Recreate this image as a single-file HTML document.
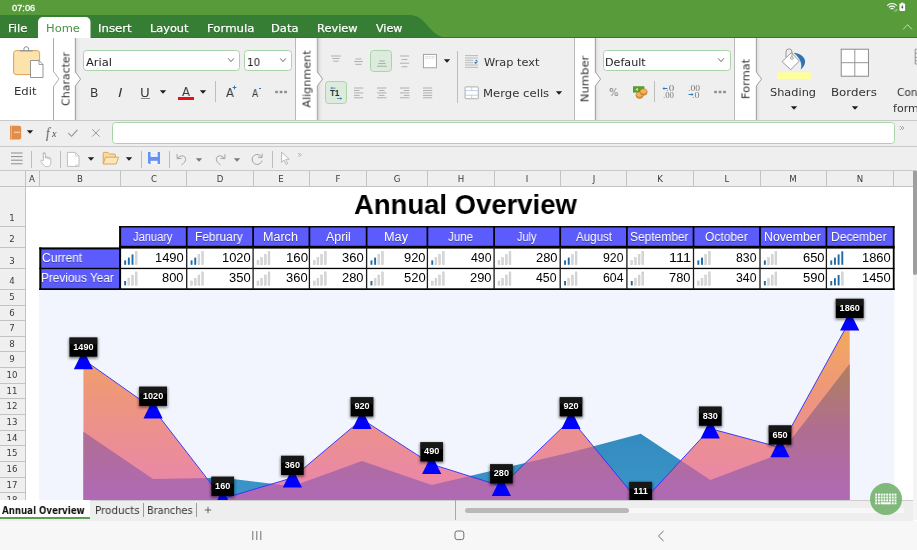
<!DOCTYPE html>
<html lang="en"><head><meta charset="utf-8"><title>Annual Overview - PlanMaker</title>
<style>

html,body{margin:0;padding:0;}
body{width:917px;height:550px;overflow:hidden;background:#fff;}
#app{position:relative;width:917px;height:550px;overflow:hidden;background:#fff;font-family:"DejaVu Sans","Liberation Sans",sans-serif;}
.t{position:absolute;white-space:nowrap;transform-origin:0 50%;display:block;will-change:transform;}
.vt{position:absolute;white-space:nowrap;display:block;will-change:transform;}
.abs{position:absolute;}
svg{position:absolute;overflow:visible;}
.combo{position:absolute;background:#fff;border:1px solid #a9d4a9;border-radius:3.5px;box-sizing:border-box;}
.sel{position:absolute;background:#dcebdc;border:1px solid #a9d4a9;border-radius:3.5px;box-sizing:border-box;}
.vsep{position:absolute;width:1px;background:#bdbdbd;}
.panel{position:absolute;top:38px;height:82px;background:linear-gradient(90deg,#cfcfcf 0,#e6e6e6 2px,#efefef 5px,#efefef 100%);}
.vtab{position:absolute;top:38px;height:82px;background:#fff;box-sizing:border-box;border-left:1px solid #b9b9b9;}
.hs{text-shadow:0 0.5px 0.5px rgba(0,0,40,.35);}
.sh{text-shadow:0 0.5px 0.5px rgba(0,0,0,.35);-webkit-text-stroke:0.25px #fff;}
</style></head>
<body>
<div id="app">
<div id="statusbar" class="abs" style="left:0;top:0;width:917px;height:38px;background:#579b3b;"></div>
<svg width="917" height="39" style="left:0;top:0">
<path d="M0,15 H409 C428,15 428,38 450,38 H0 Z" fill="#357e33"/>
<rect x="0" y="37" width="917" height="1.2" fill="#2c7a28"/>
<path d="M38,38.5 V22 a5,5 0 0 1 5,-5 H85.5 a5,5 0 0 1 5,5 V38.5 Z" fill="#fff"/>
</svg>
<span id="t1" class="t " style="left:12.00px;top:4.00px;font:normal 400 9.3px/9.3px 'Liberation Sans','DejaVu Sans',sans-serif;color:#fff;transform:scaleX(0.9959);-webkit-text-stroke:0.3px #fff;">07:06</span>
<span id="t2" class="t sh" style="left:8.17px;top:23.00px;font:normal 400 11px/11px 'DejaVu Sans','Liberation Sans',sans-serif;color:#fff;transform:scaleX(1.0545);">File</span>
<span id="t3" class="t " style="left:45.66px;top:23.00px;font:normal 400 11px/11px 'DejaVu Sans','Liberation Sans',sans-serif;color:#4b8f45;transform:scaleX(1.0436);">Home</span>
<span id="t4" class="t sh" style="left:98.03px;top:23.00px;font:normal 400 11px/11px 'DejaVu Sans','Liberation Sans',sans-serif;color:#fff;transform:scaleX(1.0660);">Insert</span>
<span id="t5" class="t sh" style="left:150.15px;top:23.00px;font:normal 400 11px/11px 'DejaVu Sans','Liberation Sans',sans-serif;color:#fff;transform:scaleX(1.0275);">Layout</span>
<span id="t6" class="t sh" style="left:206.63px;top:23.00px;font:normal 400 11px/11px 'DejaVu Sans','Liberation Sans',sans-serif;color:#fff;transform:scaleX(1.0670);">Formula</span>
<span id="t7" class="t sh" style="left:271.07px;top:23.00px;font:normal 400 11px/11px 'DejaVu Sans','Liberation Sans',sans-serif;color:#fff;transform:scaleX(1.0439);">Data</span>
<span id="t8" class="t sh" style="left:316.62px;top:23.00px;font:normal 400 11px/11px 'DejaVu Sans','Liberation Sans',sans-serif;color:#fff;transform:scaleX(1.0353);">Review</span>
<span id="t9" class="t sh" style="left:376.20px;top:23.00px;font:normal 400 11px/11px 'DejaVu Sans','Liberation Sans',sans-serif;color:#fff;transform:scaleX(1.0112);">View</span>
<svg width="24" height="12" style="left:885px;top:1px" viewBox="0 0 24 12">
<path d="M2.2,4.6 A6.6,6.6 0 0 1 11.8,4.6" fill="none" stroke="#fff" stroke-width="1.1"/>
<path d="M3.9,6.4 A4.3,4.3 0 0 1 10.1,6.4" fill="none" stroke="#fff" stroke-width="1.1"/>
<path d="M5.5,8.1 A2.2,2.2 0 0 1 8.5,8.1" fill="none" stroke="#fff" stroke-width="1.1"/>
<rect x="14.4" y="2.5" width="5.7" height="7.4" rx="0.9" fill="#fff"/><rect x="16" y="1.7" width="2.5" height="1.2" fill="#fff"/>
<path d="M17.8,3.6 L16.1,6.4 H17.3 L16.8,8.6 L18.5,5.7 H17.3 Z" fill="#1c1c1c"/>
<path d="M10,8.2 v2.4 M9.3,9.9 l0.7,0.8 l0.7,-0.8 M11.8,10.6 v-2.4 M11.1,8.9 l0.7,-0.8 l0.7,0.8" fill="none" stroke="#cfe3c6" stroke-width="0.5"/>
</svg>
<svg width="12" height="8" style="left:902px;top:22.5px" viewBox="0 0 12 8"><path d="M1.2,6.4 L5.6,1.7 L10,6.4" fill="none" stroke="#d6e8ce" stroke-width="0.9"/></svg>
<div id="ribbon" class="abs" style="left:0;top:38px;width:917px;height:82px;background:#efefef;"></div>
<div class="abs" style="left:0;top:38px;width:54px;height:82px;background:#fff;"></div>
<div class="panel" style="left:75px;width:220.5px;"></div>
<div class="panel" style="left:317.5px;width:256.29999999999995px;"></div>
<div class="panel" style="left:595.2px;width:139.19999999999993px;"></div>
<div class="panel" style="left:756.3px;width:160.70000000000005px;"></div>
<div class="vtab" style="left:53.5px;width:21.5px;"></div>
<svg width="8" height="16" style="left:74.5px;top:71px" viewBox="0 0 8 16"><path d="M0,0.5 L0,1 L5.4,8 L0,15 L0,15.5 Z" fill="#fff"/><path d="M0.3,-33 V1 L5.6,8 L0.3,15 V49" fill="none" stroke="#9a9a9a" stroke-width="0.9"/></svg>
<span id="t10" class="vt" style="left:65.6px;top:79px;font:400 11px/11px 'DejaVu Sans','Liberation Sans',sans-serif;color:#333;transform:translate(-50%,-50%) rotate(-90deg) scaleX(0.9912);">Character</span>
<div class="vtab" style="left:295.2px;width:22.30000000000001px;"></div>
<svg width="8" height="16" style="left:317.0px;top:71px" viewBox="0 0 8 16"><path d="M0,0.5 L0,1 L5.4,8 L0,15 L0,15.5 Z" fill="#fff"/><path d="M0.3,-33 V1 L5.6,8 L0.3,15 V49" fill="none" stroke="#9a9a9a" stroke-width="0.9"/></svg>
<span id="t11" class="vt" style="left:307.4px;top:78.8px;font:400 11px/11px 'DejaVu Sans','Liberation Sans',sans-serif;color:#333;transform:translate(-50%,-50%) rotate(-90deg) scaleX(1.0167);">Alignment</span>
<div class="vtab" style="left:573.8px;width:21.40000000000009px;"></div>
<svg width="8" height="16" style="left:594.7px;top:71px" viewBox="0 0 8 16"><path d="M0,0.5 L0,1 L5.4,8 L0,15 L0,15.5 Z" fill="#fff"/><path d="M0.3,-33 V1 L5.6,8 L0.3,15 V49" fill="none" stroke="#9a9a9a" stroke-width="0.9"/></svg>
<span id="t12" class="vt" style="left:585.2px;top:79px;font:400 11px/11px 'DejaVu Sans','Liberation Sans',sans-serif;color:#333;transform:translate(-50%,-50%) rotate(-90deg) scaleX(1.0535);">Number</span>
<div class="vtab" style="left:734.4px;width:21.899999999999977px;"></div>
<svg width="8" height="16" style="left:755.8px;top:71px" viewBox="0 0 8 16"><path d="M0,0.5 L0,1 L5.4,8 L0,15 L0,15.5 Z" fill="#fff"/><path d="M0.3,-33 V1 L5.6,8 L0.3,15 V49" fill="none" stroke="#9a9a9a" stroke-width="0.9"/></svg>
<span id="t13" class="vt" style="left:746.2px;top:78.8px;font:400 11px/11px 'DejaVu Sans','Liberation Sans',sans-serif;color:#333;transform:translate(-50%,-50%) rotate(-90deg) scaleX(1.0403);">Format</span>
<div class="abs" style="left:52.5px;top:38px;width:3px;height:82px;background:#fff;"></div>
<svg width="8" height="82" style="left:53px;top:38px" viewBox="0 0 8 82"><path d="M0.5,0 V33.4 L6,41 L0.5,48.6 V82" fill="none" stroke="#a2a2a2" stroke-width="0.9"/></svg>
<div class="abs" style="left:0;top:120px;width:917px;height:1px;background:#c9c9c9;"></div>
<svg width="34" height="34" style="left:11px;top:45px" viewBox="0 0 34 34">
<rect x="2.6" y="5.6" width="26" height="24" rx="2.6" fill="#fce2ab" stroke="#dfa255" stroke-width="1"/>
<path d="M12.9,5.4 V4 a2.3,2.3 0 0 1 4.6,0 V5.4" fill="#fff" stroke="#8d8d8d" stroke-width="1"/><rect x="8.7" y="4.9" width="13.1" height="1.6" rx="0.8" fill="#9a9a9a"/>
<path d="M19.5,15.5 H28 L32,19.5 V32.5 H19.5 Z" fill="#fff" stroke="#8a8a8a" stroke-width="0.9"/><path d="M28,15.5 V19.5 H32" fill="none" stroke="#8a8a8a" stroke-width="0.8"/>
</svg>
<span id="t14" class="t " style="left:14.34px;top:86.00px;font:normal 400 11px/11px 'DejaVu Sans','Liberation Sans',sans-serif;color:#333;transform:scaleX(1.0606);">Edit</span>
<div class="combo" style="left:83.4px;top:50px;width:157.1px;height:21px;"></div>
<span id="t15" class="t " style="left:85.50px;top:57.00px;font:normal 400 11px/11px 'DejaVu Sans','Liberation Sans',sans-serif;color:#222;transform:scaleX(1.0425);">Arial</span>
<svg width="10" height="8" style="left:226.2px;top:56.3px" viewBox="0 0 10 8"><path d="M2.2,2.4 L5,5.6 L7.8,2.4" fill="none" stroke="#555" stroke-width="0.9"/></svg>
<div class="combo" style="left:244.3px;top:50px;width:47.5px;height:21px;"></div>
<span id="t16" class="t " style="left:246.95px;top:57.00px;font:normal 400 11px/11px 'DejaVu Sans','Liberation Sans',sans-serif;color:#222;transform:scaleX(0.9463);">10</span>
<svg width="10" height="8" style="left:277.8px;top:56.3px" viewBox="0 0 10 8"><path d="M2.2,2.4 L5,5.6 L7.8,2.4" fill="none" stroke="#555" stroke-width="0.9"/></svg>
<span id="t17" class="t " style="left:90.17px;top:87.00px;font:normal 400 12px/12px 'DejaVu Sans','Liberation Sans',sans-serif;color:#3a3a3a;transform:scaleX(1.0143);">B</span>
<span id="t18" class="t " style="left:118.41px;top:87.00px;font:italic 400 12.4px/12.4px 'Liberation Sans','DejaVu Sans',sans-serif;color:#3a3a3a;transform:scaleX(1.2406);">I</span>
<span id="t19" class="t " style="left:140.49px;top:87.00px;font:normal 400 12px/12px 'DejaVu Sans','Liberation Sans',sans-serif;color:#3a3a3a;transform:scaleX(1.1143);">U</span>
<div class="abs" style="left:141.2px;top:98px;width:8.6px;height:1px;background:#858585;"></div>
<svg width="10" height="8" style="left:158.2px;top:88px" viewBox="0 0 10 8"><path d="M1.7999999999999998,2.3 H8.2 L5,5.7 Z" fill="#1e1e1e"/></svg>
<span id="t20" class="t " style="left:182.34px;top:86.00px;font:normal 400 12px/12px 'DejaVu Sans','Liberation Sans',sans-serif;color:#3a3a3a;transform:scaleX(0.9726);">A</span>
<div class="abs" style="left:177.7px;top:97.1px;width:16.2px;height:2.5px;background:#ee0c18;"></div>
<svg width="10" height="8" style="left:198.4px;top:88px" viewBox="0 0 10 8"><path d="M1.7999999999999998,2.3 H8.2 L5,5.7 Z" fill="#1e1e1e"/></svg>
<div class="vsep" style="left:215px;top:81px;height:21px;"></div>
<span id="t21" class="t " style="left:225.60px;top:87.00px;font:normal 400 12px/12px 'DejaVu Sans','Liberation Sans',sans-serif;color:#3a3a3a;transform:scaleX(0.9556);">A</span>
<svg width="5" height="5" style="left:232.2px;top:85.2px" viewBox="0 0 5 5"><path d="M2.5,0.6 V4.4 M0.6,2.5 H4.4" stroke="#2f79b9" stroke-width="1"/></svg>
<span id="t22" class="t " style="left:252.00px;top:88.00px;font:normal 400 10.5px/10.5px 'DejaVu Sans','Liberation Sans',sans-serif;color:#3a3a3a;transform:scaleX(0.8750);">A</span>
<div class="abs" style="left:258.6px;top:87.6px;width:2.8px;height:1px;background:#2f79b9;"></div>
<svg width="14" height="4" style="left:274.2px;top:90px" viewBox="0 0 14 4"><rect x="1.2" y="0.8" width="2.7" height="2.4" fill="#8c8c8c"/><rect x="5.7" y="0.8" width="2.7" height="2.4" fill="#8c8c8c"/><rect x="10.2" y="0.8" width="2.7" height="2.4" fill="#8c8c8c"/></svg>
<svg width="11.8" height="20" style="left:329.6px;top:53.0px" viewBox="0 0 11.8 20"><rect x="1.00" y="2.55" width="9.80" height="0.9" fill="#a9a9a9"/><rect x="2.22" y="5.15" width="7.35" height="0.9" fill="#a9a9a9"/><rect x="3.20" y="7.75" width="5.39" height="0.9" fill="#a9a9a9"/></svg>
<svg width="11.0" height="20" style="left:352.8px;top:55.7px" viewBox="0 0 11.0 20"><rect x="2.35" y="2.55" width="6.30" height="0.9" fill="#a9a9a9"/><rect x="1.00" y="5.15" width="9.00" height="0.9" fill="#a9a9a9"/><rect x="2.35" y="7.85" width="6.30" height="0.9" fill="#a9a9a9"/></svg>
<div class="sel" style="left:370.4px;top:50.2px;width:22px;height:22.2px;"></div>
<svg width="11.9" height="20" style="left:375.7px;top:58.2px" viewBox="0 0 11.9 20"><rect x="3.23" y="2.55" width="5.45" height="0.9" fill="#9fa89f"/><rect x="2.24" y="5.15" width="7.43" height="0.9" fill="#9fa89f"/><rect x="1.00" y="7.75" width="9.90" height="0.9" fill="#9fa89f"/></svg>
<svg width="11.1" height="20" style="left:398.6px;top:53.0px" viewBox="0 0 11.1 20"><rect x="1.00" y="2.55" width="9.10" height="0.9" fill="#a9a9a9"/><rect x="2.59" y="6.15" width="5.91" height="0.9" fill="#a9a9a9"/><rect x="1.00" y="9.75" width="9.10" height="0.9" fill="#a9a9a9"/><rect x="2.59" y="13.35" width="5.91" height="0.9" fill="#a9a9a9"/></svg>
<svg width="16" height="16" style="left:422.2px;top:53.3px" viewBox="0 0 16 16"><rect x="1.4" y="1.4" width="13" height="13.4" fill="#fff" stroke="#9a9a9a" stroke-width="0.9"/>
<path d="M3.2,3.6 H12.6 M3.2,5.2 H12.6" stroke="#c4c4c4" stroke-width="0.7" stroke-dasharray="1.2 0.5"/></svg>
<svg width="10" height="8" style="left:442.2px;top:56.6px" viewBox="0 0 10 8"><path d="M1.7999999999999998,2.3 H8.2 L5,5.7 Z" fill="#1e1e1e"/></svg>
<div class="sel" style="left:324.5px;top:81.4px;width:22.3px;height:22.3px;"></div>
<span id="t23" class="t " style="left:330.40px;top:89.00px;font:normal 700 9px/9px 'Liberation Sans','DejaVu Sans',sans-serif;color:#2a2a2a;transform:scaleX(0.8954);">T1</span>
<svg width="16" height="16" style="left:327.5px;top:84.5px" viewBox="0 0 16 16"><path d="M3.4,3.1 H7.4" stroke="#2f79b9" stroke-width="0.8" fill="none"/><path d="M2.4,3.1 L4.2,1.9 V4.3 Z" fill="#2f79b9"/>
<path d="M9,13.5 H13" stroke="#2f79b9" stroke-width="0.8" fill="none"/><path d="M14.2,13.5 L12.4,12.3 V14.7 Z" fill="#2f79b9"/></svg>
<svg width="11.2" height="20" style="left:352.8px;top:84.7px" viewBox="0 0 11.2 20"><rect x="1.00" y="2.55" width="9.20" height="0.9" fill="#a9a9a9"/><rect x="1.00" y="5.00" width="5.52" height="0.9" fill="#a9a9a9"/><rect x="1.00" y="7.45" width="9.20" height="0.9" fill="#a9a9a9"/><rect x="1.00" y="9.90" width="5.52" height="0.9" fill="#a9a9a9"/><rect x="1.00" y="12.35" width="9.20" height="0.9" fill="#a9a9a9"/></svg>
<svg width="11.4" height="20" style="left:375.6px;top:84.7px" viewBox="0 0 11.4 20"><rect x="1.00" y="2.55" width="9.40" height="0.9" fill="#a9a9a9"/><rect x="2.88" y="5.00" width="5.64" height="0.9" fill="#a9a9a9"/><rect x="1.00" y="7.45" width="9.40" height="0.9" fill="#a9a9a9"/><rect x="2.88" y="9.90" width="5.64" height="0.9" fill="#a9a9a9"/><rect x="1.00" y="12.35" width="9.40" height="0.9" fill="#a9a9a9"/></svg>
<svg width="11.4" height="20" style="left:398.6px;top:84.7px" viewBox="0 0 11.4 20"><rect x="1.00" y="2.55" width="9.40" height="0.9" fill="#a9a9a9"/><rect x="4.76" y="5.00" width="5.64" height="0.9" fill="#a9a9a9"/><rect x="1.00" y="7.45" width="9.40" height="0.9" fill="#a9a9a9"/><rect x="4.76" y="9.90" width="5.64" height="0.9" fill="#a9a9a9"/><rect x="1.00" y="12.35" width="9.40" height="0.9" fill="#a9a9a9"/></svg>
<svg width="11.2" height="20" style="left:421.8px;top:84.7px" viewBox="0 0 11.2 20"><rect x="1.00" y="2.55" width="9.20" height="0.9" fill="#a9a9a9"/><rect x="1.00" y="5.00" width="9.20" height="0.9" fill="#a9a9a9"/><rect x="1.00" y="7.45" width="9.20" height="0.9" fill="#a9a9a9"/><rect x="1.00" y="9.90" width="9.20" height="0.9" fill="#a9a9a9"/><rect x="1.00" y="12.35" width="9.20" height="0.9" fill="#a9a9a9"/></svg>
<div class="vsep" style="left:456.8px;top:50.5px;height:52px;"></div>
<svg width="16" height="15" style="left:464px;top:53.6px" viewBox="0 0 16 15"><path d="M1,1.6 H14 M1,4 H14 M1,6.3 H9.4 M1,8.7 H9.4 M1,11 H14 M1,13.4 H14" stroke="#b4b4b4" stroke-width="0.9"/>
<path d="M10.6,8.8 H13 V6.4 H11.4" fill="none" stroke="#2f79b9" stroke-width="0.9"/><path d="M12,7.6 L10.4,8.8 L12,10 Z" fill="#2f79b9"/></svg>
<span id="t24" class="t " style="left:484.01px;top:57.00px;font:normal 400 11px/11px 'DejaVu Sans','Liberation Sans',sans-serif;color:#333;transform:scaleX(1.0292);">Wrap text</span>
<svg width="16" height="14" style="left:463.6px;top:85.8px" viewBox="0 0 16 14"><rect x="1.1" y="0.9" width="13.2" height="11.8" rx="0.5" fill="#fff" stroke="#a6a6a6" stroke-width="0.9"/>
<path d="M1,4.6 H14.4 M1,9.2 H14.4" stroke="#a9c4e4" stroke-width="0.8"/><path d="M7.7,1 V4.4 M7.7,9.3 V12.6" stroke="#c2c2c2" stroke-width="0.8"/></svg>
<span id="t25" class="t " style="left:483.26px;top:88.00px;font:normal 400 11px/11px 'DejaVu Sans','Liberation Sans',sans-serif;color:#333;transform:scaleX(1.0591);">Merge cells</span>
<svg width="10" height="8" style="left:554.2px;top:88.6px" viewBox="0 0 10 8"><path d="M1.7999999999999998,2.3 H8.2 L5,5.7 Z" fill="#1e1e1e"/></svg>
<div class="combo" style="left:602.5px;top:50px;width:128px;height:21px;"></div>
<span id="t26" class="t " style="left:604.99px;top:57.00px;font:normal 400 11px/11px 'DejaVu Sans','Liberation Sans',sans-serif;color:#222;transform:scaleX(1.0131);">Default</span>
<svg width="10" height="8" style="left:716.2px;top:56.3px" viewBox="0 0 10 8"><path d="M2.2,2.4 L5,5.6 L7.8,2.4" fill="none" stroke="#555" stroke-width="0.9"/></svg>
<span id="t27" class="t " style="left:609.00px;top:87.00px;font:normal 400 11px/11px 'DejaVu Sans','Liberation Sans',sans-serif;color:#7a7a7a;transform:scaleX(0.9200);">%</span>
<svg width="17" height="15" style="left:631.6px;top:85px" viewBox="0 0 17 15"><rect x="1" y="1.2" width="11.4" height="6.4" fill="#5d9b34"/><path d="M3.4,4.4 l2.4,-1.6 v3.2 Z" fill="#d9ecc9"/>
<ellipse cx="7.6" cy="10.6" rx="3.6" ry="2.8" fill="#e0953a" stroke="#c27820" stroke-width="0.6"/><ellipse cx="7.6" cy="9.6" rx="3.6" ry="2.6" fill="#f0b463" stroke="#c27820" stroke-width="0.6"/>
<ellipse cx="11.6" cy="7.4" rx="3.5" ry="2.8" fill="#e0953a" stroke="#c27820" stroke-width="0.6"/><ellipse cx="11.6" cy="6.4" rx="3.5" ry="2.6" fill="#f0b463" stroke="#c27820" stroke-width="0.6"/></svg>
<div class="vsep" style="left:653.8px;top:81px;height:21px;"></div>
<span id="t28" class="t " style="left:665.60px;top:85.00px;font:normal 400 7.6px/7.6px 'Liberation Sans','DejaVu Sans',sans-serif;font-family:'Liberation Serif','DejaVu Serif',serif;color:#7a7a7a;transform:scaleX(1.4580);font-family:'Liberation Serif','DejaVu Serif',serif;">.0</span>
<span id="t29" class="t " style="left:663.00px;top:92.00px;font:normal 400 7.6px/7.6px 'Liberation Sans','DejaVu Sans',sans-serif;font-family:'Liberation Serif','DejaVu Serif',serif;color:#7a7a7a;transform:scaleX(1.1552);font-family:'Liberation Serif','DejaVu Serif',serif;">.00</span>
<svg width="6" height="5" style="left:661.6px;top:85.6px" viewBox="0 0 6 5"><path d="M5.4,2.5 H1.6" stroke="#2f79b9" stroke-width="1"/><path d="M0.4,2.5 L2.4,0.9 V4.1 Z" fill="#2f79b9"/></svg>
<span id="t30" class="t " style="left:688.38px;top:85.00px;font:normal 400 7.6px/7.6px 'Liberation Sans','DejaVu Sans',sans-serif;font-family:'Liberation Serif','DejaVu Serif',serif;color:#7a7a7a;transform:scaleX(1.2691);font-family:'Liberation Serif','DejaVu Serif',serif;">.00</span>
<span id="t31" class="t " style="left:692.40px;top:92.00px;font:normal 400 7.6px/7.6px 'Liberation Sans','DejaVu Sans',sans-serif;font-family:'Liberation Serif','DejaVu Serif',serif;color:#7a7a7a;transform:scaleX(1.3224);font-family:'Liberation Serif','DejaVu Serif',serif;">.0</span>
<svg width="6" height="5" style="left:687.6px;top:92.2px" viewBox="0 0 6 5"><path d="M0.6,2.5 H4.4" stroke="#2f79b9" stroke-width="1"/><path d="M5.6,2.5 L3.6,0.9 V4.1 Z" fill="#2f79b9"/></svg>
<svg width="14" height="4" style="left:713px;top:90px" viewBox="0 0 14 4"><rect x="1.2" y="0.8" width="2.7" height="2.4" fill="#8c8c8c"/><rect x="5.7" y="0.8" width="2.7" height="2.4" fill="#8c8c8c"/><rect x="10.2" y="0.8" width="2.7" height="2.4" fill="#8c8c8c"/></svg>
<svg width="36" height="34" style="left:775.5px;top:46px" viewBox="0 0 36 34">
<path d="M17.5,6.8 C23,7 29,10.8 29.1,15.1 C29.2,19 27,22 24.7,23.4 C26.6,18.6 24.4,12.2 17.5,6.8 Z" fill="#2f74ae"/>
<path d="M15.4,6.6 L23.3,15.1 L14.7,23.7 L6.1,15.6 Z" fill="#fff" stroke="#8e8e8e" stroke-width="0.9" stroke-linejoin="round"/>
<path d="M10,11.4 V6 a3,3.1 0 0 1 6,0 V10.6" fill="none" stroke="#8e8e8e" stroke-width="0.9"/><circle cx="15.9" cy="12" r="1.4" fill="#fff" stroke="#8e8e8e" stroke-width="0.8"/>
<rect x="1.5" y="26.3" width="33.3" height="6.6" fill="#ffff99"/></svg>
<span id="t32" class="t " style="left:769.72px;top:87.00px;font:normal 400 11px/11px 'DejaVu Sans','Liberation Sans',sans-serif;color:#333;transform:scaleX(1.0296);">Shading</span>
<svg width="10" height="8" style="left:788.5px;top:103.7px" viewBox="0 0 10 8"><path d="M1.7999999999999998,2.3 H8.2 L5,5.7 Z" fill="#1e1e1e"/></svg>
<svg width="30" height="30" style="left:840px;top:47.5px" viewBox="0 0 30 30"><rect x="1.2" y="1.2" width="27.2" height="27" fill="#fff" stroke="#7f7f7f" stroke-width="0.9"/><path d="M14.8,1.2 V28.2 M1.2,14.7 H28.4" stroke="#8b8b8b" stroke-width="0.9"/></svg>
<span id="t33" class="t " style="left:831.18px;top:87.00px;font:normal 400 11px/11px 'DejaVu Sans','Liberation Sans',sans-serif;color:#333;transform:scaleX(1.0746);">Borders</span>
<svg width="10" height="8" style="left:849.5px;top:103.7px" viewBox="0 0 10 8"><path d="M1.7999999999999998,2.3 H8.2 L5,5.7 Z" fill="#1e1e1e"/></svg>
<span id="t34" class="t " style="left:897.00px;top:87.00px;font:normal 400 11px/11px 'DejaVu Sans','Liberation Sans',sans-serif;color:#333;transform:scaleX(0.9575);">Con</span>
<span id="t35" class="t " style="left:893.00px;top:103.00px;font:normal 400 11px/11px 'DejaVu Sans','Liberation Sans',sans-serif;color:#333;transform:scaleX(1.0027);">form</span>
<svg width="6" height="30" style="left:913.6px;top:47.5px" viewBox="0 0 6 30"><path d="M1.2,1.2 H6 M1.2,1.2 V16 H6 M1.2,5.2 H6 M1.2,9.4 H6 M1.2,12.8 H6" stroke="#8b8b8b" stroke-width="0.9" fill="none"/></svg>
<div id="formulabar" class="abs" style="left:0;top:121px;width:917px;height:25px;background:#efefef;"></div>
<div class="abs" style="left:0;top:146px;width:917px;height:1px;background:#c9c9c9;"></div>
<svg width="14" height="17" style="left:8.8px;top:124.4px" viewBox="0 0 14 17"><path d="M1,1.7 H10.2 a2,2 0 0 1 2,2 V13.4 a2,2 0 0 1 -2,2 H1 Z" fill="#e38c47"/><rect x="1.9" y="1.7" width="0.8" height="13.7" fill="#f3bd92"/>
<rect x="5.3" y="7.6" width="1.3" height="1.5" fill="#fdeee2"/><rect x="7.4" y="7.6" width="1.3" height="1.5" fill="#fdeee2"/><rect x="9.5" y="7.6" width="1.3" height="1.5" fill="#fdeee2"/></svg>
<svg width="10" height="8" style="left:25px;top:128.4px" viewBox="0 0 10 8"><path d="M1.7999999999999998,2.3 H8.2 L5,5.7 Z" fill="#1e1e1e"/></svg>
<span id="t36" class="t " style="left:46.40px;top:125.00px;font:italic 400 15.5px/15.5px 'Liberation Sans','DejaVu Sans',sans-serif;font-family:'Liberation Serif','DejaVu Serif',serif;color:#4a4a4a;transform:scaleX(0.8000);font-family:'Liberation Serif','DejaVu Serif',serif;">f</span>
<span id="t37" class="t " style="left:51.53px;top:129.00px;font:italic 400 10.5px/10.5px 'Liberation Sans','DejaVu Sans',sans-serif;font-family:'Liberation Serif','DejaVu Serif',serif;color:#4a4a4a;transform:scaleX(0.9333);font-family:'Liberation Serif','DejaVu Serif',serif;">x</span>
<svg width="12" height="11" style="left:67.4px;top:127.4px" viewBox="0 0 12 11"><path d="M1.3,6.2 L4.6,9.3 L10.4,2.8" fill="none" stroke="#8f8f8f" stroke-width="1.1"/></svg>
<svg width="10" height="10" style="left:91.4px;top:128.2px" viewBox="0 0 10 10"><path d="M1.2,1.2 L8.6,8.6 M8.6,1.2 L1.2,8.6" fill="none" stroke="#8f8f8f" stroke-width="0.9"/></svg>
<div class="combo" style="left:112px;top:122.3px;width:783.3px;height:21.4px;"></div>
<svg width="6" height="6" style="left:899.4px;top:125.4px" viewBox="0 0 6 6"><path d="M0.8,1 L2.8,3 L0.8,5 M3,1 L5,3 L3,5" fill="none" stroke="#8a8a8a" stroke-width="0.7"/></svg>
<div id="toolbar" class="abs" style="left:0;top:147px;width:917px;height:23px;background:#efefef;"></div>
<div class="abs" style="left:0;top:170px;width:917px;height:1px;background:#c9c9c9;"></div>
<svg width="14" height="15" style="left:10px;top:151px" viewBox="0 0 14 15"><path d="M1,2 H12.6 M1,5.6 H12.6 M1,9.2 H12.6 M1,12.8 H12.6" stroke="#8c8c8c" stroke-width="1"/></svg>
<div class="vsep" style="left:31.2px;top:150.5px;height:17px;"></div>
<svg width="14" height="17" style="left:38.6px;top:150.6px" viewBox="0 0 14 17"><circle cx="5.2" cy="2.6" r="1.6" fill="#b7c7ea"/>
<path d="M4.4,9.6 V3.4 a1,1 0 0 1 2,0 V7.2 V6.4 a0.9,0.9 0 0 1 1.8,0 V7.6 V7 a0.9,0.9 0 0 1 1.8,0 V8.2 V7.8 a0.9,0.9 0 0 1 1.8,0 V11.6 C11.8,14.6 10.4,15.6 8.2,15.6 C5.6,15.6 4.6,14.4 2,10.6 C1.4,9.6 2.6,8.8 3.4,9.6 Z" fill="#fff" stroke="#ababab" stroke-width="0.8"/></svg>
<div class="vsep" style="left:60px;top:150.5px;height:17px;"></div>
<svg width="15" height="17" style="left:66px;top:150.8px" viewBox="0 0 15 17"><path d="M1.4,1.4 H9.4 L13,5 V15.4 H1.4 Z" fill="#fff" stroke="#b8b8b8" stroke-width="0.9"/><path d="M9.4,1.4 V5 H13" fill="none" stroke="#c4c4c4" stroke-width="0.8"/><rect x="9" y="13.6" width="3" height="1" fill="#d0d0d0"/></svg>
<svg width="10" height="8" style="left:86.4px;top:155px" viewBox="0 0 10 8"><path d="M1.7999999999999998,2.3 H8.2 L5,5.7 Z" fill="#1e1e1e"/></svg>
<svg width="18" height="15" style="left:102px;top:151.2px" viewBox="0 0 18 15"><path d="M1.2,12.8 V2.2 a0.8,0.8 0 0 1 0.8,-0.8 H6 L7.6,3 H12.6 a0.8,0.8 0 0 1 0.8,0.8 V6" fill="#fbd99b" stroke="#d9a24f" stroke-width="0.9"/>
<path d="M1.2,13 L3.6,6.2 H16.6 L14.2,13 Z" fill="#fde6b8" stroke="#d9a24f" stroke-width="0.9" stroke-linejoin="round"/></svg>
<svg width="10" height="8" style="left:124px;top:155px" viewBox="0 0 10 8"><path d="M1.7999999999999998,2.3 H8.2 L5,5.7 Z" fill="#1e1e1e"/></svg>
<div class="vsep" style="left:141.4px;top:150.5px;height:17px;"></div>
<svg width="14" height="14" style="left:147.2px;top:151.2px" viewBox="0 0 14 14"><path d="M1,1 H13 V13.1 H2.2 L1,11.9 Z" fill="#6492f3"/><rect x="3.6" y="1" width="7" height="4.9" fill="#f4f7fe"/><rect x="4.6" y="2" width="5" height="2.4" fill="#e4ebfc"/><rect x="3.6" y="9.8" width="7" height="3.3" fill="#f7f5ee"/></svg>
<div class="vsep" style="left:168.8px;top:150.5px;height:17px;"></div>
<svg width="14" height="14" style="left:175px;top:152px" viewBox="0 0 14 14"><path d="M2.6,6.4 C5.4,2.2 11,3.4 10.6,7.6 C10.4,9.6 8.8,11.4 6.6,12.8" fill="none" stroke="#a3a3a3" stroke-width="1"/><path d="M2,2.2 L2.2,6.8 L6.6,6.2" fill="none" stroke="#a3a3a3" stroke-width="1"/></svg>
<svg width="10" height="8" style="left:194.4px;top:155.6px" viewBox="0 0 10 8"><path d="M1.7999999999999998,2.3 H8.2 L5,5.7 Z" fill="#7a7a7a"/></svg>
<svg width="14" height="14" style="left:212.6px;top:152px" viewBox="0 0 14 14"><path d="M11.4,6.4 C8.6,2.2 3,3.4 3.4,7.6 C3.6,9.6 5.2,11.4 7.4,12.8" fill="none" stroke="#a3a3a3" stroke-width="1"/><path d="M12,2.2 L11.8,6.8 L7.4,6.2" fill="none" stroke="#a3a3a3" stroke-width="1"/></svg>
<svg width="10" height="8" style="left:231.6px;top:155.6px" viewBox="0 0 10 8"><path d="M1.7999999999999998,2.3 H8.2 L5,5.7 Z" fill="#7a7a7a"/></svg>
<svg width="14" height="14" style="left:250px;top:152px" viewBox="0 0 14 14"><path d="M11.6,5.2 A5,5 0 1 0 12,8.6" fill="none" stroke="#a3a3a3" stroke-width="1"/><path d="M12.2,1.6 L12,5.6 L8,5.2" fill="none" stroke="#a3a3a3" stroke-width="1"/></svg>
<div class="vsep" style="left:271.8px;top:150.5px;height:17px;"></div>
<svg width="12" height="16" style="left:280px;top:151.4px" viewBox="0 0 12 16"><path d="M1.6,1.2 V11.4 L4.2,9 L6,13.4 L7.6,12.7 L5.8,8.4 L9.2,8.2 Z" fill="#fff" stroke="#a8a8a8" stroke-width="0.8" stroke-linejoin="round"/></svg>
<svg width="6" height="6" style="left:297.4px;top:151.6px" viewBox="0 0 6 6"><path d="M1,1 L2.8,2.8 L1,4.6 M2.6,1 L4.4,2.8 L2.6,4.6" fill="none" stroke="#9a9a9a" stroke-width="0.6"/></svg>
<div id="colhdr" class="abs" style="left:0;top:171px;width:913px;height:15px;background:#efefef;"></div>
<div class="abs" style="left:0;top:186px;width:913px;height:1px;background:#c3c3c3;"></div>
<div class="abs" style="left:25.0px;top:171px;width:1px;height:15px;background:#c3c3c3;"></div>
<div class="abs" style="left:38.8px;top:171px;width:1px;height:15px;background:#c3c3c3;"></div>
<div class="abs" style="left:119.8px;top:171px;width:1px;height:15px;background:#c3c3c3;"></div>
<div class="abs" style="left:186.2px;top:171px;width:1px;height:15px;background:#c3c3c3;"></div>
<div class="abs" style="left:252.6px;top:171px;width:1px;height:15px;background:#c3c3c3;"></div>
<div class="abs" style="left:308.9px;top:171px;width:1px;height:15px;background:#c3c3c3;"></div>
<div class="abs" style="left:366.1px;top:171px;width:1px;height:15px;background:#c3c3c3;"></div>
<div class="abs" style="left:426.9px;top:171px;width:1px;height:15px;background:#c3c3c3;"></div>
<div class="abs" style="left:493.6px;top:171px;width:1px;height:15px;background:#c3c3c3;"></div>
<div class="abs" style="left:559.7px;top:171px;width:1px;height:15px;background:#c3c3c3;"></div>
<div class="abs" style="left:626.4px;top:171px;width:1px;height:15px;background:#c3c3c3;"></div>
<div class="abs" style="left:693.0px;top:171px;width:1px;height:15px;background:#c3c3c3;"></div>
<div class="abs" style="left:759.5px;top:171px;width:1px;height:15px;background:#c3c3c3;"></div>
<div class="abs" style="left:825.9px;top:171px;width:1px;height:15px;background:#c3c3c3;"></div>
<div class="abs" style="left:892.9px;top:171px;width:1px;height:15px;background:#c3c3c3;"></div>
<span class="t " style="left:32.40px;top:175.00px;font:normal 400 8.6px/8.6px 'DejaVu Sans','Liberation Sans',sans-serif;color:#3a3a3a;transform:translateX(-50%);">A</span>
<span class="t " style="left:79.80px;top:175.00px;font:normal 400 8.6px/8.6px 'DejaVu Sans','Liberation Sans',sans-serif;color:#3a3a3a;transform:translateX(-50%);">B</span>
<span class="t " style="left:153.50px;top:175.00px;font:normal 400 8.6px/8.6px 'DejaVu Sans','Liberation Sans',sans-serif;color:#3a3a3a;transform:translateX(-50%);">C</span>
<span class="t " style="left:219.90px;top:175.00px;font:normal 400 8.6px/8.6px 'DejaVu Sans','Liberation Sans',sans-serif;color:#3a3a3a;transform:translateX(-50%);">D</span>
<span class="t " style="left:281.25px;top:175.00px;font:normal 400 8.6px/8.6px 'DejaVu Sans','Liberation Sans',sans-serif;color:#3a3a3a;transform:translateX(-50%);">E</span>
<span class="t " style="left:338.00px;top:175.00px;font:normal 400 8.6px/8.6px 'DejaVu Sans','Liberation Sans',sans-serif;color:#3a3a3a;transform:translateX(-50%);">F</span>
<span class="t " style="left:397.00px;top:175.00px;font:normal 400 8.6px/8.6px 'DejaVu Sans','Liberation Sans',sans-serif;color:#3a3a3a;transform:translateX(-50%);">G</span>
<span class="t " style="left:460.75px;top:175.00px;font:normal 400 8.6px/8.6px 'DejaVu Sans','Liberation Sans',sans-serif;color:#3a3a3a;transform:translateX(-50%);">H</span>
<span class="t " style="left:527.15px;top:175.00px;font:normal 400 8.6px/8.6px 'DejaVu Sans','Liberation Sans',sans-serif;color:#3a3a3a;transform:translateX(-50%);">I</span>
<span class="t " style="left:593.55px;top:175.00px;font:normal 400 8.6px/8.6px 'DejaVu Sans','Liberation Sans',sans-serif;color:#3a3a3a;transform:translateX(-50%);">J</span>
<span class="t " style="left:660.20px;top:175.00px;font:normal 400 8.6px/8.6px 'DejaVu Sans','Liberation Sans',sans-serif;color:#3a3a3a;transform:translateX(-50%);">K</span>
<span class="t " style="left:726.75px;top:175.00px;font:normal 400 8.6px/8.6px 'DejaVu Sans','Liberation Sans',sans-serif;color:#3a3a3a;transform:translateX(-50%);">L</span>
<span class="t " style="left:793.20px;top:175.00px;font:normal 400 8.6px/8.6px 'DejaVu Sans','Liberation Sans',sans-serif;color:#3a3a3a;transform:translateX(-50%);">M</span>
<span class="t " style="left:859.90px;top:175.00px;font:normal 400 8.6px/8.6px 'DejaVu Sans','Liberation Sans',sans-serif;color:#3a3a3a;transform:translateX(-50%);">N</span>
<div id="rowhdr" class="abs" style="left:0;top:187px;width:25px;height:313px;background:#efefef;"></div>
<div class="abs" style="left:25px;top:171px;width:1px;height:329px;background:#c3c3c3;"></div>
<div class="abs" style="left:0;top:225.9px;width:25px;height:1px;background:#c3c3c3;"></div>
<div class="abs" style="left:0;top:247.1px;width:25px;height:1px;background:#c3c3c3;"></div>
<div class="abs" style="left:0;top:268.1px;width:25px;height:1px;background:#c3c3c3;"></div>
<div class="abs" style="left:0;top:288.8px;width:25px;height:1px;background:#c3c3c3;"></div>
<div class="abs" style="left:0;top:304.5px;width:25px;height:1px;background:#c3c3c3;"></div>
<div class="abs" style="left:0;top:320.1px;width:25px;height:1px;background:#c3c3c3;"></div>
<div class="abs" style="left:0;top:335.8px;width:25px;height:1px;background:#c3c3c3;"></div>
<div class="abs" style="left:0;top:351.4px;width:25px;height:1px;background:#c3c3c3;"></div>
<div class="abs" style="left:0;top:367.1px;width:25px;height:1px;background:#c3c3c3;"></div>
<div class="abs" style="left:0;top:382.8px;width:25px;height:1px;background:#c3c3c3;"></div>
<div class="abs" style="left:0;top:398.4px;width:25px;height:1px;background:#c3c3c3;"></div>
<div class="abs" style="left:0;top:414.1px;width:25px;height:1px;background:#c3c3c3;"></div>
<div class="abs" style="left:0;top:429.7px;width:25px;height:1px;background:#c3c3c3;"></div>
<div class="abs" style="left:0;top:445.4px;width:25px;height:1px;background:#c3c3c3;"></div>
<div class="abs" style="left:0;top:461.1px;width:25px;height:1px;background:#c3c3c3;"></div>
<div class="abs" style="left:0;top:476.7px;width:25px;height:1px;background:#c3c3c3;"></div>
<div class="abs" style="left:0;top:492.4px;width:25px;height:1px;background:#c3c3c3;"></div>
<span class="t " style="left:12.30px;top:214.00px;font:normal 400 8.6px/8.6px 'DejaVu Sans','Liberation Sans',sans-serif;color:#3a3a3a;transform:translateX(-50%);">1</span>
<span class="t " style="left:12.30px;top:235.00px;font:normal 400 8.6px/8.6px 'DejaVu Sans','Liberation Sans',sans-serif;color:#3a3a3a;transform:translateX(-50%);">2</span>
<span class="t " style="left:12.30px;top:257.00px;font:normal 400 8.6px/8.6px 'DejaVu Sans','Liberation Sans',sans-serif;color:#3a3a3a;transform:translateX(-50%);">3</span>
<span class="t " style="left:12.30px;top:277.00px;font:normal 400 8.6px/8.6px 'DejaVu Sans','Liberation Sans',sans-serif;color:#3a3a3a;transform:translateX(-50%);">4</span>
<span class="t " style="left:12.30px;top:293.00px;font:normal 400 8.6px/8.6px 'DejaVu Sans','Liberation Sans',sans-serif;color:#3a3a3a;transform:translateX(-50%);">5</span>
<span class="t " style="left:12.30px;top:309.00px;font:normal 400 8.6px/8.6px 'DejaVu Sans','Liberation Sans',sans-serif;color:#3a3a3a;transform:translateX(-50%);">6</span>
<span class="t " style="left:12.30px;top:324.00px;font:normal 400 8.6px/8.6px 'DejaVu Sans','Liberation Sans',sans-serif;color:#3a3a3a;transform:translateX(-50%);">7</span>
<span class="t " style="left:12.30px;top:340.00px;font:normal 400 8.6px/8.6px 'DejaVu Sans','Liberation Sans',sans-serif;color:#3a3a3a;transform:translateX(-50%);">8</span>
<span class="t " style="left:12.30px;top:355.00px;font:normal 400 8.6px/8.6px 'DejaVu Sans','Liberation Sans',sans-serif;color:#3a3a3a;transform:translateX(-50%);">9</span>
<span class="t " style="left:12.30px;top:371.00px;font:normal 400 8.6px/8.6px 'DejaVu Sans','Liberation Sans',sans-serif;color:#3a3a3a;transform:translateX(-50%);">10</span>
<span class="t " style="left:12.30px;top:387.00px;font:normal 400 8.6px/8.6px 'DejaVu Sans','Liberation Sans',sans-serif;color:#3a3a3a;transform:translateX(-50%);">11</span>
<span class="t " style="left:12.30px;top:402.00px;font:normal 400 8.6px/8.6px 'DejaVu Sans','Liberation Sans',sans-serif;color:#3a3a3a;transform:translateX(-50%);">12</span>
<span class="t " style="left:12.30px;top:418.00px;font:normal 400 8.6px/8.6px 'DejaVu Sans','Liberation Sans',sans-serif;color:#3a3a3a;transform:translateX(-50%);">13</span>
<span class="t " style="left:12.30px;top:434.00px;font:normal 400 8.6px/8.6px 'DejaVu Sans','Liberation Sans',sans-serif;color:#3a3a3a;transform:translateX(-50%);">14</span>
<span class="t " style="left:12.30px;top:449.00px;font:normal 400 8.6px/8.6px 'DejaVu Sans','Liberation Sans',sans-serif;color:#3a3a3a;transform:translateX(-50%);">15</span>
<span class="t " style="left:12.30px;top:465.00px;font:normal 400 8.6px/8.6px 'DejaVu Sans','Liberation Sans',sans-serif;color:#3a3a3a;transform:translateX(-50%);">16</span>
<span class="t " style="left:12.30px;top:481.00px;font:normal 400 8.6px/8.6px 'DejaVu Sans','Liberation Sans',sans-serif;color:#3a3a3a;transform:translateX(-50%);">17</span>
<span class="t " style="left:12.30px;top:496.00px;font:normal 400 8.6px/8.6px 'DejaVu Sans','Liberation Sans',sans-serif;color:#3a3a3a;transform:translateX(-50%);">18</span>
<span id="t38" class="t " style="left:354.31px;top:190.00px;font:normal 700 28.4px/28.4px 'Liberation Sans','DejaVu Sans',sans-serif;color:#000;transform:scaleX(0.9675);">Annual Overview</span>
<svg id="tablegrid" width="860" height="70" style="left:38px;top:224px" viewBox="38 224 860 70"><rect x="120" y="226.8" width="773.6" height="20" fill="#5c5cfc"/><rect x="40.3" y="248.4" width="80" height="40.8" fill="#5c5cfc"/><rect x="120" y="247" width="773.6" height="42.2" fill="#fff"/><rect x="119" y="226.05" width="775.6" height="1.45" fill="#000"/><rect x="119" y="245.8" width="775.6" height="2.8" fill="#000"/><rect x="39.3" y="247.4" width="81" height="2" fill="#000"/><rect x="39.3" y="267.8" width="855.3" height="1.3" fill="#000"/><rect x="39.3" y="288.3" width="855.3" height="1.75" fill="#000"/><rect x="39.3" y="247.4" width="2" height="42.6" fill="#000"/><rect x="119.1" y="226.05" width="2" height="64" fill="#000"/><rect x="892.8" y="226.05" width="1.8" height="64" fill="#000"/><rect x="185.85" y="226.05" width="1.7" height="21" fill="#000"/><rect x="186.05" y="247" width="1.3" height="42" fill="#1c1c1c"/><rect x="252.25" y="226.05" width="1.7" height="21" fill="#000"/><rect x="252.45" y="247" width="1.3" height="42" fill="#1c1c1c"/><rect x="308.55" y="226.05" width="1.7" height="21" fill="#000"/><rect x="308.75" y="247" width="1.3" height="42" fill="#1c1c1c"/><rect x="365.75" y="226.05" width="1.7" height="21" fill="#000"/><rect x="365.95" y="247" width="1.3" height="42" fill="#1c1c1c"/><rect x="426.55" y="226.05" width="1.7" height="21" fill="#000"/><rect x="426.75" y="247" width="1.3" height="42" fill="#1c1c1c"/><rect x="493.25" y="226.05" width="1.7" height="21" fill="#000"/><rect x="493.45" y="247" width="1.3" height="42" fill="#1c1c1c"/><rect x="559.35" y="226.05" width="1.7" height="21" fill="#000"/><rect x="559.55" y="247" width="1.3" height="42" fill="#1c1c1c"/><rect x="626.05" y="226.05" width="1.7" height="21" fill="#000"/><rect x="626.25" y="247" width="1.3" height="42" fill="#1c1c1c"/><rect x="692.65" y="226.05" width="1.7" height="21" fill="#000"/><rect x="692.85" y="247" width="1.3" height="42" fill="#1c1c1c"/><rect x="759.15" y="226.05" width="1.7" height="21" fill="#000"/><rect x="759.35" y="247" width="1.3" height="42" fill="#1c1c1c"/><rect x="825.55" y="226.05" width="1.7" height="21" fill="#000"/><rect x="825.75" y="247" width="1.3" height="42" fill="#1c1c1c"/><rect x="124.20" y="260.40" width="1.9" height="4.4" fill="#1f6aa5"/><rect x="127.88" y="257.60" width="1.9" height="7.2" fill="#1f6aa5"/><rect x="131.56" y="254.40" width="1.9" height="10.4" fill="#1f6aa5"/><rect x="135.24" y="251.30" width="1.9" height="13.5" fill="#d6d6d6" stroke="#c4c4c4" stroke-width="0.4"/><rect x="124.20" y="281.00" width="1.9" height="4.4" fill="#1f6aa5"/><rect x="127.88" y="278.20" width="1.9" height="7.2" fill="#d6d6d6" stroke="#c4c4c4" stroke-width="0.4"/><rect x="131.56" y="275.00" width="1.9" height="10.4" fill="#d6d6d6" stroke="#c4c4c4" stroke-width="0.4"/><rect x="135.24" y="271.90" width="1.9" height="13.5" fill="#d6d6d6" stroke="#c4c4c4" stroke-width="0.4"/><rect x="190.60" y="260.40" width="1.9" height="4.4" fill="#1f6aa5"/><rect x="194.28" y="257.60" width="1.9" height="7.2" fill="#1f6aa5"/><rect x="197.96" y="254.40" width="1.9" height="10.4" fill="#d6d6d6" stroke="#c4c4c4" stroke-width="0.4"/><rect x="201.64" y="251.30" width="1.9" height="13.5" fill="#d6d6d6" stroke="#c4c4c4" stroke-width="0.4"/><rect x="190.60" y="281.00" width="1.9" height="4.4" fill="#d6d6d6" stroke="#c4c4c4" stroke-width="0.4"/><rect x="194.28" y="278.20" width="1.9" height="7.2" fill="#d6d6d6" stroke="#c4c4c4" stroke-width="0.4"/><rect x="197.96" y="275.00" width="1.9" height="10.4" fill="#d6d6d6" stroke="#c4c4c4" stroke-width="0.4"/><rect x="201.64" y="271.90" width="1.9" height="13.5" fill="#d6d6d6" stroke="#c4c4c4" stroke-width="0.4"/><rect x="257.00" y="260.40" width="1.9" height="4.4" fill="#d6d6d6" stroke="#c4c4c4" stroke-width="0.4"/><rect x="260.68" y="257.60" width="1.9" height="7.2" fill="#d6d6d6" stroke="#c4c4c4" stroke-width="0.4"/><rect x="264.36" y="254.40" width="1.9" height="10.4" fill="#d6d6d6" stroke="#c4c4c4" stroke-width="0.4"/><rect x="268.04" y="251.30" width="1.9" height="13.5" fill="#d6d6d6" stroke="#c4c4c4" stroke-width="0.4"/><rect x="257.00" y="281.00" width="1.9" height="4.4" fill="#d6d6d6" stroke="#c4c4c4" stroke-width="0.4"/><rect x="260.68" y="278.20" width="1.9" height="7.2" fill="#d6d6d6" stroke="#c4c4c4" stroke-width="0.4"/><rect x="264.36" y="275.00" width="1.9" height="10.4" fill="#d6d6d6" stroke="#c4c4c4" stroke-width="0.4"/><rect x="268.04" y="271.90" width="1.9" height="13.5" fill="#d6d6d6" stroke="#c4c4c4" stroke-width="0.4"/><rect x="313.30" y="260.40" width="1.9" height="4.4" fill="#d6d6d6" stroke="#c4c4c4" stroke-width="0.4"/><rect x="316.98" y="257.60" width="1.9" height="7.2" fill="#d6d6d6" stroke="#c4c4c4" stroke-width="0.4"/><rect x="320.66" y="254.40" width="1.9" height="10.4" fill="#d6d6d6" stroke="#c4c4c4" stroke-width="0.4"/><rect x="324.34" y="251.30" width="1.9" height="13.5" fill="#d6d6d6" stroke="#c4c4c4" stroke-width="0.4"/><rect x="313.30" y="281.00" width="1.9" height="4.4" fill="#d6d6d6" stroke="#c4c4c4" stroke-width="0.4"/><rect x="316.98" y="278.20" width="1.9" height="7.2" fill="#d6d6d6" stroke="#c4c4c4" stroke-width="0.4"/><rect x="320.66" y="275.00" width="1.9" height="10.4" fill="#d6d6d6" stroke="#c4c4c4" stroke-width="0.4"/><rect x="324.34" y="271.90" width="1.9" height="13.5" fill="#d6d6d6" stroke="#c4c4c4" stroke-width="0.4"/><rect x="370.50" y="260.40" width="1.9" height="4.4" fill="#1f6aa5"/><rect x="374.18" y="257.60" width="1.9" height="7.2" fill="#1f6aa5"/><rect x="377.86" y="254.40" width="1.9" height="10.4" fill="#d6d6d6" stroke="#c4c4c4" stroke-width="0.4"/><rect x="381.54" y="251.30" width="1.9" height="13.5" fill="#d6d6d6" stroke="#c4c4c4" stroke-width="0.4"/><rect x="370.50" y="281.00" width="1.9" height="4.4" fill="#1f6aa5"/><rect x="374.18" y="278.20" width="1.9" height="7.2" fill="#d6d6d6" stroke="#c4c4c4" stroke-width="0.4"/><rect x="377.86" y="275.00" width="1.9" height="10.4" fill="#d6d6d6" stroke="#c4c4c4" stroke-width="0.4"/><rect x="381.54" y="271.90" width="1.9" height="13.5" fill="#d6d6d6" stroke="#c4c4c4" stroke-width="0.4"/><rect x="431.30" y="260.40" width="1.9" height="4.4" fill="#1f6aa5"/><rect x="434.98" y="257.60" width="1.9" height="7.2" fill="#d6d6d6" stroke="#c4c4c4" stroke-width="0.4"/><rect x="438.66" y="254.40" width="1.9" height="10.4" fill="#d6d6d6" stroke="#c4c4c4" stroke-width="0.4"/><rect x="442.34" y="251.30" width="1.9" height="13.5" fill="#d6d6d6" stroke="#c4c4c4" stroke-width="0.4"/><rect x="431.30" y="281.00" width="1.9" height="4.4" fill="#d6d6d6" stroke="#c4c4c4" stroke-width="0.4"/><rect x="434.98" y="278.20" width="1.9" height="7.2" fill="#d6d6d6" stroke="#c4c4c4" stroke-width="0.4"/><rect x="438.66" y="275.00" width="1.9" height="10.4" fill="#d6d6d6" stroke="#c4c4c4" stroke-width="0.4"/><rect x="442.34" y="271.90" width="1.9" height="13.5" fill="#d6d6d6" stroke="#c4c4c4" stroke-width="0.4"/><rect x="498.00" y="260.40" width="1.9" height="4.4" fill="#d6d6d6" stroke="#c4c4c4" stroke-width="0.4"/><rect x="501.68" y="257.60" width="1.9" height="7.2" fill="#d6d6d6" stroke="#c4c4c4" stroke-width="0.4"/><rect x="505.36" y="254.40" width="1.9" height="10.4" fill="#d6d6d6" stroke="#c4c4c4" stroke-width="0.4"/><rect x="509.04" y="251.30" width="1.9" height="13.5" fill="#d6d6d6" stroke="#c4c4c4" stroke-width="0.4"/><rect x="498.00" y="281.00" width="1.9" height="4.4" fill="#d6d6d6" stroke="#c4c4c4" stroke-width="0.4"/><rect x="501.68" y="278.20" width="1.9" height="7.2" fill="#d6d6d6" stroke="#c4c4c4" stroke-width="0.4"/><rect x="505.36" y="275.00" width="1.9" height="10.4" fill="#d6d6d6" stroke="#c4c4c4" stroke-width="0.4"/><rect x="509.04" y="271.90" width="1.9" height="13.5" fill="#d6d6d6" stroke="#c4c4c4" stroke-width="0.4"/><rect x="564.10" y="260.40" width="1.9" height="4.4" fill="#1f6aa5"/><rect x="567.78" y="257.60" width="1.9" height="7.2" fill="#1f6aa5"/><rect x="571.46" y="254.40" width="1.9" height="10.4" fill="#d6d6d6" stroke="#c4c4c4" stroke-width="0.4"/><rect x="575.14" y="251.30" width="1.9" height="13.5" fill="#d6d6d6" stroke="#c4c4c4" stroke-width="0.4"/><rect x="564.10" y="281.00" width="1.9" height="4.4" fill="#1f6aa5"/><rect x="567.78" y="278.20" width="1.9" height="7.2" fill="#d6d6d6" stroke="#c4c4c4" stroke-width="0.4"/><rect x="571.46" y="275.00" width="1.9" height="10.4" fill="#d6d6d6" stroke="#c4c4c4" stroke-width="0.4"/><rect x="575.14" y="271.90" width="1.9" height="13.5" fill="#d6d6d6" stroke="#c4c4c4" stroke-width="0.4"/><rect x="630.80" y="260.40" width="1.9" height="4.4" fill="#d6d6d6" stroke="#c4c4c4" stroke-width="0.4"/><rect x="634.48" y="257.60" width="1.9" height="7.2" fill="#d6d6d6" stroke="#c4c4c4" stroke-width="0.4"/><rect x="638.16" y="254.40" width="1.9" height="10.4" fill="#d6d6d6" stroke="#c4c4c4" stroke-width="0.4"/><rect x="641.84" y="251.30" width="1.9" height="13.5" fill="#d6d6d6" stroke="#c4c4c4" stroke-width="0.4"/><rect x="630.80" y="281.00" width="1.9" height="4.4" fill="#1f6aa5"/><rect x="634.48" y="278.20" width="1.9" height="7.2" fill="#d6d6d6" stroke="#c4c4c4" stroke-width="0.4"/><rect x="638.16" y="275.00" width="1.9" height="10.4" fill="#d6d6d6" stroke="#c4c4c4" stroke-width="0.4"/><rect x="641.84" y="271.90" width="1.9" height="13.5" fill="#d6d6d6" stroke="#c4c4c4" stroke-width="0.4"/><rect x="697.40" y="260.40" width="1.9" height="4.4" fill="#1f6aa5"/><rect x="701.08" y="257.60" width="1.9" height="7.2" fill="#1f6aa5"/><rect x="704.76" y="254.40" width="1.9" height="10.4" fill="#d6d6d6" stroke="#c4c4c4" stroke-width="0.4"/><rect x="708.44" y="251.30" width="1.9" height="13.5" fill="#d6d6d6" stroke="#c4c4c4" stroke-width="0.4"/><rect x="697.40" y="281.00" width="1.9" height="4.4" fill="#d6d6d6" stroke="#c4c4c4" stroke-width="0.4"/><rect x="701.08" y="278.20" width="1.9" height="7.2" fill="#d6d6d6" stroke="#c4c4c4" stroke-width="0.4"/><rect x="704.76" y="275.00" width="1.9" height="10.4" fill="#d6d6d6" stroke="#c4c4c4" stroke-width="0.4"/><rect x="708.44" y="271.90" width="1.9" height="13.5" fill="#d6d6d6" stroke="#c4c4c4" stroke-width="0.4"/><rect x="763.90" y="260.40" width="1.9" height="4.4" fill="#1f6aa5"/><rect x="767.58" y="257.60" width="1.9" height="7.2" fill="#d6d6d6" stroke="#c4c4c4" stroke-width="0.4"/><rect x="771.26" y="254.40" width="1.9" height="10.4" fill="#d6d6d6" stroke="#c4c4c4" stroke-width="0.4"/><rect x="774.94" y="251.30" width="1.9" height="13.5" fill="#d6d6d6" stroke="#c4c4c4" stroke-width="0.4"/><rect x="763.90" y="281.00" width="1.9" height="4.4" fill="#1f6aa5"/><rect x="767.58" y="278.20" width="1.9" height="7.2" fill="#d6d6d6" stroke="#c4c4c4" stroke-width="0.4"/><rect x="771.26" y="275.00" width="1.9" height="10.4" fill="#d6d6d6" stroke="#c4c4c4" stroke-width="0.4"/><rect x="774.94" y="271.90" width="1.9" height="13.5" fill="#d6d6d6" stroke="#c4c4c4" stroke-width="0.4"/><rect x="830.30" y="260.40" width="1.9" height="4.4" fill="#1f6aa5"/><rect x="833.98" y="257.60" width="1.9" height="7.2" fill="#1f6aa5"/><rect x="837.66" y="254.40" width="1.9" height="10.4" fill="#1f6aa5"/><rect x="841.34" y="251.30" width="1.9" height="13.5" fill="#1f6aa5"/><rect x="830.30" y="281.00" width="1.9" height="4.4" fill="#1f6aa5"/><rect x="833.98" y="278.20" width="1.9" height="7.2" fill="#1f6aa5"/><rect x="837.66" y="275.00" width="1.9" height="10.4" fill="#1f6aa5"/><rect x="841.34" y="271.90" width="1.9" height="13.5" fill="#d6d6d6" stroke="#c4c4c4" stroke-width="0.4"/></svg>
<span id="t39" class="t hs" style="left:42.20px;top:252.00px;font:normal 400 12.3px/12.3px 'Liberation Sans','DejaVu Sans',sans-serif;color:#fff;transform:scaleX(0.9811);">Current</span>
<span id="t40" class="t hs" style="left:41.24px;top:272.00px;font:normal 400 12.3px/12.3px 'Liberation Sans','DejaVu Sans',sans-serif;color:#fff;transform:scaleX(0.9599);">Previous Year</span>
<span id="t41" class="t hs" style="left:132.80px;top:231.00px;font:normal 400 12.3px/12.3px 'Liberation Sans','DejaVu Sans',sans-serif;color:#fff;transform:scaleX(0.9014);">January</span>
<span id="t42" class="t " style="left:154.73px;top:252.00px;font:normal 400 12.3px/12.3px 'Liberation Sans','DejaVu Sans',sans-serif;color:#000;transform:scaleX(1.0494);">1490</span>
<span id="t43" class="t " style="left:161.92px;top:272.00px;font:normal 400 12.3px/12.3px 'Liberation Sans','DejaVu Sans',sans-serif;color:#000;transform:scaleX(1.0447);">800</span>
<span id="t44" class="t hs" style="left:194.73px;top:231.00px;font:normal 400 12.3px/12.3px 'Liberation Sans','DejaVu Sans',sans-serif;color:#fff;transform:scaleX(0.9703);">February</span>
<span id="t45" class="t " style="left:221.85px;top:252.00px;font:normal 400 12.3px/12.3px 'Liberation Sans','DejaVu Sans',sans-serif;color:#000;transform:scaleX(1.0494);">1020</span>
<span id="t46" class="t " style="left:229.25px;top:272.00px;font:normal 400 12.3px/12.3px 'Liberation Sans','DejaVu Sans',sans-serif;color:#000;transform:scaleX(1.0540);">350</span>
<span id="t47" class="t hs" style="left:263.35px;top:231.00px;font:normal 400 12.3px/12.3px 'Liberation Sans','DejaVu Sans',sans-serif;color:#fff;transform:scaleX(1.0202);">March</span>
<span id="t48" class="t " style="left:285.65px;top:252.00px;font:normal 400 12.3px/12.3px 'Liberation Sans','DejaVu Sans',sans-serif;color:#000;transform:scaleX(1.0749);">160</span>
<span id="t49" class="t " style="left:285.82px;top:272.00px;font:normal 400 12.3px/12.3px 'Liberation Sans','DejaVu Sans',sans-serif;color:#000;transform:scaleX(1.0540);">360</span>
<span id="t50" class="t hs" style="left:326.10px;top:231.00px;font:normal 400 12.3px/12.3px 'Liberation Sans','DejaVu Sans',sans-serif;color:#fff;transform:scaleX(1.0097);">April</span>
<span id="t51" class="t " style="left:342.30px;top:252.00px;font:normal 400 12.3px/12.3px 'Liberation Sans','DejaVu Sans',sans-serif;color:#000;transform:scaleX(1.0540);">360</span>
<span id="t52" class="t " style="left:342.35px;top:272.00px;font:normal 400 12.3px/12.3px 'Liberation Sans','DejaVu Sans',sans-serif;color:#000;transform:scaleX(1.0486);">280</span>
<span id="t53" class="t hs" style="left:384.31px;top:231.00px;font:normal 400 12.3px/12.3px 'Liberation Sans','DejaVu Sans',sans-serif;color:#fff;transform:scaleX(1.0327);">May</span>
<span id="t54" class="t " style="left:403.86px;top:252.00px;font:normal 400 12.3px/12.3px 'Liberation Sans','DejaVu Sans',sans-serif;color:#000;transform:scaleX(1.0495);">920</span>
<span id="t55" class="t " style="left:403.80px;top:272.00px;font:normal 400 12.3px/12.3px 'Liberation Sans','DejaVu Sans',sans-serif;color:#000;transform:scaleX(1.0569);">520</span>
<span id="t56" class="t hs" style="left:448.30px;top:231.00px;font:normal 400 12.3px/12.3px 'Liberation Sans','DejaVu Sans',sans-serif;color:#fff;transform:scaleX(0.9395);">June</span>
<span id="t57" class="t " style="left:470.66px;top:252.00px;font:normal 400 12.3px/12.3px 'Liberation Sans','DejaVu Sans',sans-serif;color:#000;transform:scaleX(0.9938);">490</span>
<span id="t58" class="t " style="left:470.30px;top:272.00px;font:normal 400 12.3px/12.3px 'Liberation Sans','DejaVu Sans',sans-serif;color:#000;transform:scaleX(1.0486);">290</span>
<span id="t59" class="t hs" style="left:516.77px;top:231.00px;font:normal 400 12.3px/12.3px 'Liberation Sans','DejaVu Sans',sans-serif;color:#fff;transform:scaleX(0.8866);">July</span>
<span id="t60" class="t " style="left:536.49px;top:252.00px;font:normal 400 12.3px/12.3px 'Liberation Sans','DejaVu Sans',sans-serif;color:#000;transform:scaleX(1.0486);">280</span>
<span id="t61" class="t " style="left:536.22px;top:272.00px;font:normal 400 12.3px/12.3px 'Liberation Sans','DejaVu Sans',sans-serif;color:#000;transform:scaleX(0.9938);">450</span>
<span id="t62" class="t hs" style="left:575.67px;top:231.00px;font:normal 400 12.3px/12.3px 'Liberation Sans','DejaVu Sans',sans-serif;color:#fff;transform:scaleX(0.9417);">August</span>
<span id="t63" class="t " style="left:602.95px;top:252.00px;font:normal 400 12.3px/12.3px 'Liberation Sans','DejaVu Sans',sans-serif;color:#000;transform:scaleX(0.9938);">920</span>
<span id="t64" class="t " style="left:602.95px;top:272.00px;font:normal 400 12.3px/12.3px 'Liberation Sans','DejaVu Sans',sans-serif;color:#000;transform:scaleX(0.9938);">604</span>
<span id="t65" class="t hs" style="left:630.45px;top:231.00px;font:normal 400 12.3px/12.3px 'Liberation Sans','DejaVu Sans',sans-serif;color:#fff;transform:scaleX(0.9720);">September</span>
<span id="t66" class="t " style="left:668.94px;top:252.00px;font:normal 400 12.3px/12.3px 'Liberation Sans','DejaVu Sans',sans-serif;color:#000;transform:scaleX(1.1790);">111</span>
<span id="t67" class="t " style="left:669.17px;top:272.00px;font:normal 400 12.3px/12.3px 'Liberation Sans','DejaVu Sans',sans-serif;color:#000;transform:scaleX(1.0475);">780</span>
<span id="t68" class="t hs" style="left:704.90px;top:231.00px;font:normal 400 12.3px/12.3px 'Liberation Sans','DejaVu Sans',sans-serif;color:#fff;transform:scaleX(0.9783);">October</span>
<span id="t69" class="t " style="left:736.05px;top:252.00px;font:normal 400 12.3px/12.3px 'Liberation Sans','DejaVu Sans',sans-serif;color:#000;transform:scaleX(0.9938);">830</span>
<span id="t70" class="t " style="left:736.05px;top:272.00px;font:normal 400 12.3px/12.3px 'Liberation Sans','DejaVu Sans',sans-serif;color:#000;transform:scaleX(0.9938);">340</span>
<span id="t71" class="t hs" style="left:764.00px;top:231.00px;font:normal 400 12.3px/12.3px 'Liberation Sans','DejaVu Sans',sans-serif;color:#fff;transform:scaleX(0.9995);">November</span>
<span id="t72" class="t " style="left:802.85px;top:252.00px;font:normal 400 12.3px/12.3px 'Liberation Sans','DejaVu Sans',sans-serif;color:#000;transform:scaleX(1.0500);">650</span>
<span id="t73" class="t " style="left:802.80px;top:272.00px;font:normal 400 12.3px/12.3px 'Liberation Sans','DejaVu Sans',sans-serif;color:#000;transform:scaleX(1.0569);">590</span>
<span id="t74" class="t hs" style="left:831.22px;top:231.00px;font:normal 400 12.3px/12.3px 'Liberation Sans','DejaVu Sans',sans-serif;color:#fff;transform:scaleX(0.9779);">December</span>
<span id="t75" class="t " style="left:861.97px;top:252.00px;font:normal 400 12.3px/12.3px 'Liberation Sans','DejaVu Sans',sans-serif;color:#000;transform:scaleX(1.0494);">1860</span>
<span id="t76" class="t " style="left:861.97px;top:272.00px;font:normal 400 12.3px/12.3px 'Liberation Sans','DejaVu Sans',sans-serif;color:#000;transform:scaleX(1.0494);">1450</span>
<svg id="chart" width="856" height="210" style="left:39px;top:290px;overflow:hidden;will-change:transform" viewBox="39 290 856 210">
<defs>
<linearGradient id="gcur" gradientUnits="userSpaceOnUse" x1="0" y1="320" x2="0" y2="500"><stop offset="0" stop-color="#f3aa58"/><stop offset=".45" stop-color="#ee957f"/><stop offset="1" stop-color="#e985b0"/></linearGradient>
<linearGradient id="gov" gradientUnits="userSpaceOnUse" x1="0" y1="360" x2="0" y2="500"><stop offset="0" stop-color="#b0805c"/><stop offset=".5" stop-color="#af6e90"/><stop offset="1" stop-color="#b069b6"/></linearGradient>
<linearGradient id="gblue" gradientUnits="userSpaceOnUse" x1="0" y1="430" x2="0" y2="500"><stop offset="0" stop-color="#338abe"/><stop offset="1" stop-color="#3b96c9"/></linearGradient>
<clipPath id="ccur"><polygon points="83.4,359.5 153.1,408.7 222.7,498.7 292.4,477.8 362.0,419.2 431.7,464.2 501.4,486.2 571.0,419.2 640.7,503.9 710.3,428.6 780.0,447.4 849.7,320.8 849.7,520 83.4,520"/></clipPath>
<filter id="lsh" x="-30%" y="-30%" width="160%" height="170%"><feGaussianBlur stdDeviation="1.6"/></filter>
</defs>
<rect x="39" y="290" width="855.3" height="210" fill="#f2f5fd"/>
<polygon points="83.4,431.7 153.1,478.9 222.7,477.8 292.4,486.2 362.0,461.1 431.7,485.1 501.4,468.4 571.0,452.3 640.7,433.8 710.3,479.9 780.0,453.7 849.7,363.7 849.7,520 83.4,520" fill="url(#gblue)"/>
<polygon points="83.4,359.5 153.1,408.7 222.7,498.7 292.4,477.8 362.0,419.2 431.7,464.2 501.4,486.2 571.0,419.2 640.7,503.9 710.3,428.6 780.0,447.4 849.7,320.8 849.7,520 83.4,520" fill="url(#gcur)"/>
<polygon points="83.4,431.7 153.1,478.9 222.7,477.8 292.4,486.2 362.0,461.1 431.7,485.1 501.4,468.4 571.0,452.3 640.7,433.8 710.3,479.9 780.0,453.7 849.7,363.7 849.7,520 83.4,520" fill="url(#gov)" clip-path="url(#ccur)"/>
<polyline points="83.4,359.5 153.1,408.7 222.7,498.7 292.4,477.8 362.0,419.2 431.7,464.2 501.4,486.2 571.0,419.2 640.7,503.9 710.3,428.6 780.0,447.4 849.7,320.8" fill="none" stroke="#2b2bff" stroke-width="0.9"/>
<polygon points="83.4,349.9 93.0,369.3 73.8,369.3" fill="#0000ff"/>
<polygon points="153.1,399.1 162.7,418.5 143.5,418.5" fill="#0000ff"/>
<polygon points="222.7,489.1 232.3,508.5 213.1,508.5" fill="#0000ff"/>
<polygon points="292.4,468.2 302.0,487.6 282.8,487.6" fill="#0000ff"/>
<polygon points="362.0,409.6 371.6,429.0 352.4,429.0" fill="#0000ff"/>
<polygon points="431.7,454.6 441.3,474.0 422.1,474.0" fill="#0000ff"/>
<polygon points="501.4,476.6 511.0,496.0 491.8,496.0" fill="#0000ff"/>
<polygon points="571.0,409.6 580.6,429.0 561.4,429.0" fill="#0000ff"/>
<polygon points="640.7,494.3 650.3,513.7 631.1,513.7" fill="#0000ff"/>
<polygon points="710.3,419.0 719.9,438.4 700.7,438.4" fill="#0000ff"/>
<polygon points="780.0,437.8 789.6,457.2 770.4,457.2" fill="#0000ff"/>
<polygon points="849.7,311.2 859.3,330.6 840.1,330.6" fill="#0000ff"/>
<rect x="69.0" y="338.3" width="28.8" height="20" fill="#000" opacity=".55" filter="url(#lsh)"/>
<rect x="69.5" y="337.5" width="27.8" height="19.2" fill="#000"/>
<rect x="69.5" y="337.5" width="27.8" height="7" fill="#2a2a2a" opacity=".55"/>
<text x="83.4" y="349.6" text-anchor="middle" font-family="'Liberation Sans','DejaVu Sans',sans-serif" font-size="9.1" font-weight="700" fill="#fff">1490</text>
<rect x="138.7" y="387.5" width="28.8" height="20" fill="#000" opacity=".55" filter="url(#lsh)"/>
<rect x="139.2" y="386.7" width="27.8" height="19.2" fill="#000"/>
<rect x="139.2" y="386.7" width="27.8" height="7" fill="#2a2a2a" opacity=".55"/>
<text x="153.1" y="398.8" text-anchor="middle" font-family="'Liberation Sans','DejaVu Sans',sans-serif" font-size="9.1" font-weight="700" fill="#fff">1020</text>
<rect x="210.9" y="477.5" width="23.6" height="20" fill="#000" opacity=".55" filter="url(#lsh)"/>
<rect x="211.4" y="476.7" width="22.6" height="19.2" fill="#000"/>
<rect x="211.4" y="476.7" width="22.6" height="7" fill="#2a2a2a" opacity=".55"/>
<text x="222.7" y="488.8" text-anchor="middle" font-family="'Liberation Sans','DejaVu Sans',sans-serif" font-size="9.1" font-weight="700" fill="#fff">160</text>
<rect x="280.6" y="456.6" width="23.6" height="20" fill="#000" opacity=".55" filter="url(#lsh)"/>
<rect x="281.1" y="455.8" width="22.6" height="19.2" fill="#000"/>
<rect x="281.1" y="455.8" width="22.6" height="7" fill="#2a2a2a" opacity=".55"/>
<text x="292.4" y="467.9" text-anchor="middle" font-family="'Liberation Sans','DejaVu Sans',sans-serif" font-size="9.1" font-weight="700" fill="#fff">360</text>
<rect x="350.2" y="398.0" width="23.6" height="20" fill="#000" opacity=".55" filter="url(#lsh)"/>
<rect x="350.7" y="397.2" width="22.6" height="19.2" fill="#000"/>
<rect x="350.7" y="397.2" width="22.6" height="7" fill="#2a2a2a" opacity=".55"/>
<text x="362.0" y="409.3" text-anchor="middle" font-family="'Liberation Sans','DejaVu Sans',sans-serif" font-size="9.1" font-weight="700" fill="#fff">920</text>
<rect x="419.9" y="443.0" width="23.6" height="20" fill="#000" opacity=".55" filter="url(#lsh)"/>
<rect x="420.4" y="442.2" width="22.6" height="19.2" fill="#000"/>
<rect x="420.4" y="442.2" width="22.6" height="7" fill="#2a2a2a" opacity=".55"/>
<text x="431.7" y="454.3" text-anchor="middle" font-family="'Liberation Sans','DejaVu Sans',sans-serif" font-size="9.1" font-weight="700" fill="#fff">490</text>
<rect x="489.6" y="465.0" width="23.6" height="20" fill="#000" opacity=".55" filter="url(#lsh)"/>
<rect x="490.1" y="464.2" width="22.6" height="19.2" fill="#000"/>
<rect x="490.1" y="464.2" width="22.6" height="7" fill="#2a2a2a" opacity=".55"/>
<text x="501.4" y="476.3" text-anchor="middle" font-family="'Liberation Sans','DejaVu Sans',sans-serif" font-size="9.1" font-weight="700" fill="#fff">280</text>
<rect x="559.2" y="398.0" width="23.6" height="20" fill="#000" opacity=".55" filter="url(#lsh)"/>
<rect x="559.7" y="397.2" width="22.6" height="19.2" fill="#000"/>
<rect x="559.7" y="397.2" width="22.6" height="7" fill="#2a2a2a" opacity=".55"/>
<text x="571.0" y="409.3" text-anchor="middle" font-family="'Liberation Sans','DejaVu Sans',sans-serif" font-size="9.1" font-weight="700" fill="#fff">920</text>
<rect x="628.9" y="482.7" width="23.6" height="20" fill="#000" opacity=".55" filter="url(#lsh)"/>
<rect x="629.4" y="481.9" width="22.6" height="19.2" fill="#000"/>
<rect x="629.4" y="481.9" width="22.6" height="7" fill="#2a2a2a" opacity=".55"/>
<text x="640.7" y="494.0" text-anchor="middle" font-family="'Liberation Sans','DejaVu Sans',sans-serif" font-size="9.1" font-weight="700" fill="#fff">111</text>
<rect x="698.5" y="407.4" width="23.6" height="20" fill="#000" opacity=".55" filter="url(#lsh)"/>
<rect x="699.0" y="406.6" width="22.6" height="19.2" fill="#000"/>
<rect x="699.0" y="406.6" width="22.6" height="7" fill="#2a2a2a" opacity=".55"/>
<text x="710.3" y="418.7" text-anchor="middle" font-family="'Liberation Sans','DejaVu Sans',sans-serif" font-size="9.1" font-weight="700" fill="#fff">830</text>
<rect x="768.2" y="426.2" width="23.6" height="20" fill="#000" opacity=".55" filter="url(#lsh)"/>
<rect x="768.7" y="425.4" width="22.6" height="19.2" fill="#000"/>
<rect x="768.7" y="425.4" width="22.6" height="7" fill="#2a2a2a" opacity=".55"/>
<text x="780.0" y="437.5" text-anchor="middle" font-family="'Liberation Sans','DejaVu Sans',sans-serif" font-size="9.1" font-weight="700" fill="#fff">650</text>
<rect x="835.3" y="299.6" width="28.8" height="20" fill="#000" opacity=".55" filter="url(#lsh)"/>
<rect x="835.8" y="298.8" width="27.8" height="19.2" fill="#000"/>
<rect x="835.8" y="298.8" width="27.8" height="7" fill="#2a2a2a" opacity=".55"/>
<text x="849.7" y="310.9" text-anchor="middle" font-family="'Liberation Sans','DejaVu Sans',sans-serif" font-size="9.1" font-weight="700" fill="#fff">1860</text>
</svg>
<div class="abs" style="left:913px;top:171px;width:4px;height:349px;background:#f4f4f4;"></div>
<div class="abs" style="left:912.8px;top:171px;width:4.4px;height:104px;background:#9e9e9e;border-radius:0 0 2px 2px;"></div>
<div id="sheettabs" class="abs" style="left:0;top:500px;width:912.6px;height:21px;background:#eeeeee;"></div>
<div class="abs" style="left:0;top:499.6px;width:912.6px;height:1px;background:#cdcdcd;"></div>
<div class="abs" style="left:464.8px;top:508px;width:439.4px;height:5px;border-radius:2.5px;background:#f7f7f7;"></div>
<div class="abs" style="left:0;top:500px;width:90px;height:17.4px;background:#fff;border-bottom:2px solid #5b9e55;"></div>
<span id="t77" class="t " style="left:2.20px;top:505.00px;font:normal 700 10.6px/10.6px 'DejaVu Sans','Liberation Sans',sans-serif;color:#111;transform:scaleX(0.8171);">Annual Overview</span>
<span id="t78" class="t " style="left:95.18px;top:506.00px;font:normal 400 10.8px/10.8px 'DejaVu Sans','Liberation Sans',sans-serif;color:#333;transform:scaleX(0.9572);">Products</span>
<div class="vsep" style="left:143.2px;top:503.4px;height:13.4px;background:#9b9b9b;"></div>
<span id="t79" class="t " style="left:146.54px;top:506.00px;font:normal 400 10.8px/10.8px 'DejaVu Sans','Liberation Sans',sans-serif;color:#333;transform:scaleX(0.9049);">Branches</span>
<div class="vsep" style="left:196px;top:503.4px;height:13.4px;background:#9b9b9b;"></div>
<svg width="8" height="8" style="left:204.2px;top:506.4px" viewBox="0 0 8 8"><path d="M4,0.8 V7.2 M0.8,4 H7.2" stroke="#555" stroke-width="0.9"/></svg>
<div class="abs" style="left:454.6px;top:500.4px;width:1px;height:19.6px;background:#a8a8a8;"></div>
<div class="abs" style="left:464.8px;top:508px;width:164.2px;height:5px;border-radius:2.5px;background:#b9b9b9;"></div>
<div id="navbar" class="abs" style="left:0;top:520.5px;width:917px;height:30px;background:#f7f7f7;"></div>
<svg width="12" height="11" style="left:251.4px;top:530px" viewBox="0 0 12 11"><path d="M1.8,1 V10 M5.8,1 V10 M9.8,1 V10" stroke="#6e6e6e" stroke-width="1"/></svg>
<svg width="11" height="11" style="left:454.4px;top:530.4px" viewBox="0 0 11 11"><rect x="1" y="1" width="8.8" height="8.6" rx="2.2" fill="none" stroke="#6e6e6e" stroke-width="1"/></svg>
<svg width="8" height="12" style="left:656.8px;top:529.6px" viewBox="0 0 8 12"><path d="M6.6,1 L1.4,6 L6.6,11" fill="none" stroke="#6e6e6e" stroke-width="1"/></svg>
<svg width="34" height="34" style="left:869px;top:481.6px" viewBox="0 0 34 34"><circle cx="17" cy="17" r="16" fill="#6fb169" opacity=".88"/><rect x="6.20" y="11.60" width="1.9" height="2" fill="#fff"/><rect x="8.96" y="11.60" width="1.9" height="2" fill="#fff"/><rect x="11.72" y="11.60" width="1.9" height="2" fill="#fff"/><rect x="14.48" y="11.60" width="1.9" height="2" fill="#fff"/><rect x="17.24" y="11.60" width="1.9" height="2" fill="#fff"/><rect x="20.00" y="11.60" width="1.9" height="2" fill="#fff"/><rect x="22.76" y="11.60" width="1.9" height="2" fill="#fff"/><rect x="25.52" y="11.60" width="1.9" height="2" fill="#fff"/><rect x="6.20" y="14.50" width="1.9" height="2" fill="#fff"/><rect x="8.96" y="14.50" width="1.9" height="2" fill="#fff"/><rect x="11.72" y="14.50" width="1.9" height="2" fill="#fff"/><rect x="14.48" y="14.50" width="1.9" height="2" fill="#fff"/><rect x="17.24" y="14.50" width="1.9" height="2" fill="#fff"/><rect x="20.00" y="14.50" width="1.9" height="2" fill="#fff"/><rect x="22.76" y="14.50" width="1.9" height="2" fill="#fff"/><rect x="25.52" y="14.50" width="1.9" height="2" fill="#fff"/><rect x="6.20" y="17.40" width="1.9" height="2" fill="#fff"/><rect x="8.96" y="17.40" width="1.9" height="2" fill="#fff"/><rect x="11.72" y="17.40" width="1.9" height="2" fill="#fff"/><rect x="14.48" y="17.40" width="1.9" height="2" fill="#fff"/><rect x="17.24" y="17.40" width="1.9" height="2" fill="#fff"/><rect x="20.00" y="17.40" width="1.9" height="2" fill="#fff"/><rect x="22.76" y="17.40" width="1.9" height="2" fill="#fff"/><rect x="25.52" y="17.40" width="1.9" height="2" fill="#fff"/><rect x="6.20" y="20.3" width="1.9" height="2" fill="#fff"/><rect x="8.96" y="20.3" width="1.9" height="2" fill="#fff"/><rect x="22.76" y="20.3" width="1.9" height="2" fill="#fff"/><rect x="25.52" y="20.3" width="1.9" height="2" fill="#fff"/><rect x="11.7" y="20.3" width="10.2" height="2" fill="#fff"/></svg>
</div>
</body></html>
